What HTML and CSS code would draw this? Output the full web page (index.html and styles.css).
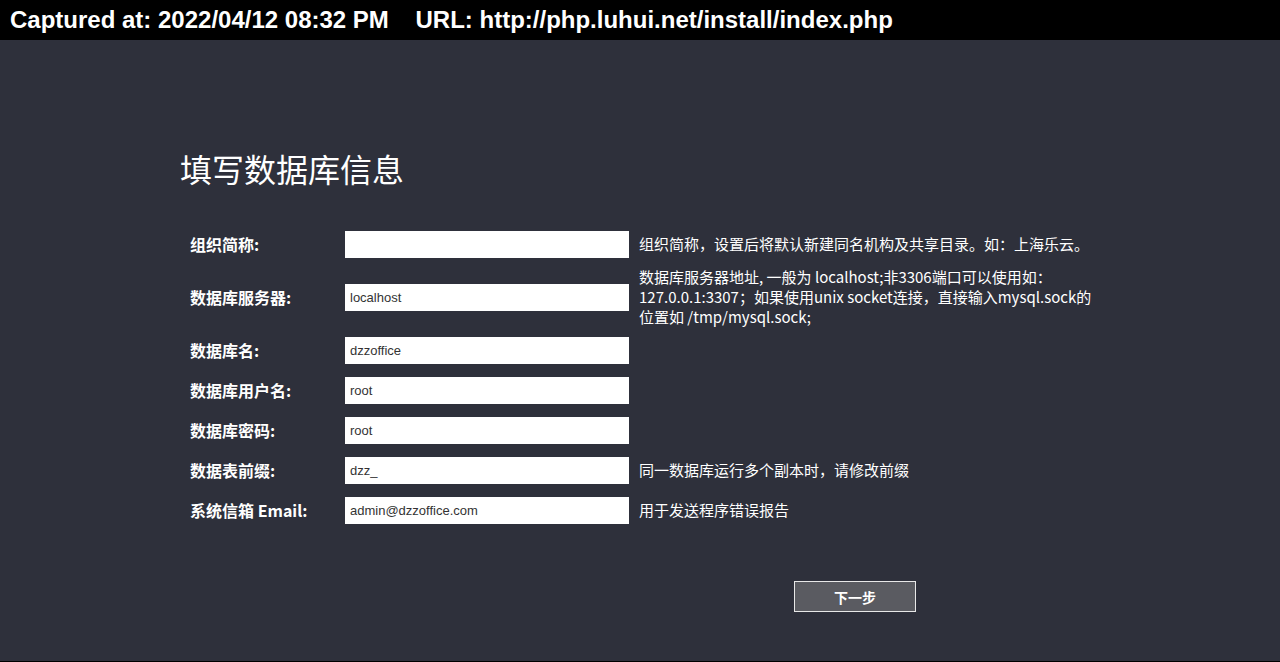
FILE: index.html
```html
<!DOCTYPE html>
<html lang="zh-CN">
<head>
<meta charset="utf-8">
<title>填写数据库信息</title>
<link rel="stylesheet" href="styles.css">
</head>
<body>
<div class="capbar">Captured at: 2022/04/12 08:32 PM    URL: http://php.luhui.net/install/index.php</div>
<div class="page">
  <div class="main">
    <h1 class="title">填写数据库信息</h1>
    <div class="form">
      <div class="row">
        <div class="label">组织简称:</div>
        <input class="field" type="text" value="">
        <div class="desc">组织简称，设置后将默认新建同名机构及共享目录。如：上海乐云。</div>
      </div>
      <div class="row">
        <div class="label">数据库服务器:</div>
        <input class="field" type="text" value="localhost">
        <div class="desc">数据库服务器地址, 一般为 localhost;非3306端口可以使用如：127.0.0.1:3307；如果使用unix socket连接，直接输入mysql.sock的位置如 /tmp/mysql.sock;</div>
      </div>
      <div class="row">
        <div class="label">数据库名:</div>
        <input class="field" type="text" value="dzzoffice">
        <div class="desc"></div>
      </div>
      <div class="row">
        <div class="label">数据库用户名:</div>
        <input class="field" type="text" value="root">
        <div class="desc"></div>
      </div>
      <div class="row">
        <div class="label">数据库密码:</div>
        <input class="field" type="text" value="root">
        <div class="desc"></div>
      </div>
      <div class="row">
        <div class="label">数据表前缀:</div>
        <input class="field" type="text" value="dzz_">
        <div class="desc">同一数据库运行多个副本时，请修改前缀</div>
      </div>
      <div class="row">
        <div class="label">系统信箱 Email:</div>
        <input class="field" type="text" value="admin@dzzoffice.com">
        <div class="desc">用于发送程序错误报告</div>
      </div>
    </div>
    <div class="actions">
      <button class="btn" type="button">下一步</button>
    </div>
  </div>
</div>
</body>
</html>
```
FILE: styles.css
```css
html, body {
  margin: 0;
  padding: 0;
}
body {
  background: #2e303b;
  font-family: "Noto Sans CJK SC", "Noto Sans", sans-serif;
  color: #fff;
}
.capbar {
  height: 40px;
  line-height: 40px;
  background: #000;
  color: #fff;
  font-family: "Liberation Sans", Arial, sans-serif;
  font-weight: bold;
  font-size: 24px;
  padding-left: 10px;
  white-space: pre;
  overflow: hidden;
}
.page {
  height: 621px;
  border-bottom: 1px solid #000;
  overflow: hidden;
}
.main {
  padding: 108px 0 0 180px;
}
.title {
  margin: 0;
  font-size: 32px;
  line-height: 40px;
  font-weight: 400;
  color: #fff;
}
.form {
  margin-top: 36px;
  display: flex;
  flex-direction: column;
}
.row {
  display: grid;
  grid-template-columns: 155px 284px 460px;
  column-gap: 10px;
  align-items: center;
  min-height: 40px;
}
.label {
  padding-left: 10px;
  font-size: 16px;
  font-weight: bold;
  line-height: 20px;
  white-space: nowrap;
}
.field {
  box-sizing: border-box;
  width: 284px;
  height: 27px;
  margin: 0;
  border: 0;
  padding: 0 5px;
  background: #fff;
  color: #333;
  font-family: "Liberation Sans", Arial, sans-serif;
  font-size: 13px;
  outline: none;
}
.desc {
  font-size: 15px;
  line-height: 20px;
  padding: 3px 0;
  color: #fff;
}
.actions {
  margin-top: 51px;
  padding-left: 614px;
}
.btn {
  box-sizing: border-box;
  width: 122px;
  height: 31px;
  margin: 0;
  padding: 0;
  background: #5a5b61;
  border: 1px solid #e8e8e8;
  color: #fff;
  font-family: "Noto Sans CJK SC", sans-serif;
  font-size: 14px;
  font-weight: bold;
  cursor: pointer;
}
```
